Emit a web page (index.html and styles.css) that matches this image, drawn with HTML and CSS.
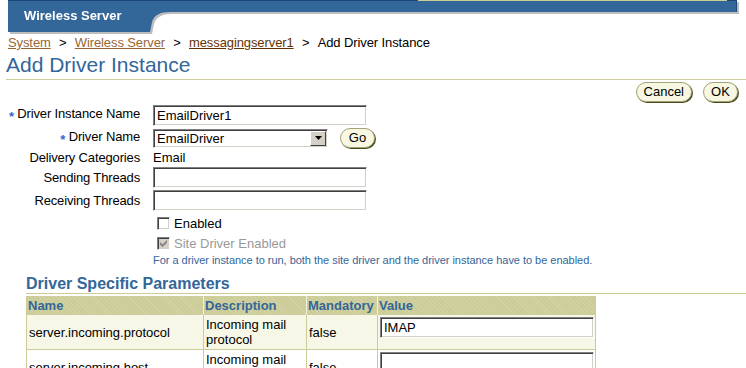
FILE: index.html
```html
<!DOCTYPE html>
<html lang="en">
<head>
    <meta charset="UTF-8">
    <meta name="viewport" content="width=device-width, initial-scale=1.0">
    <title>Add Driver Instance</title>
    <link rel="stylesheet" href="styles.css">
</head>
<body>
    <div class="header">
        <div class="tab">Wireless Server</div>
        <svg class="tab-edge" width="23" height="32" viewBox="0 0 23 32">
            <path d="M0 0H23V12C13 12 7 15 5 22L3 32H0Z" fill="#336699"/>
            <rect x="0" y="0" width="23" height="1" fill="#1d4878"/>
        </svg>
        <div class="bar"><div class="bar-strip"></div></div>
    </div>

    <div class="crumbs">
        <a href="#" class="crumb">System</a><span class="sep">&gt;</span><a href="#" class="crumb">Wireless Server</a><span class="sep">&gt;</span><a href="#" class="crumb visited">messagingserver1</a><span class="sep">&gt;</span><span>Add Driver Instance</span>
    </div>

    <h1 class="title">Add Driver Instance</h1>

    <div class="actions">
        <button type="button" class="pill">Cancel</button>
        <button type="button" class="pill">OK</button>
    </div>

    <form class="form">
        <label class="form-label" for="instanceName"><span class="req">*</span> Driver Instance Name</label>
        <div class="form-field"><input type="text" class="text-input" id="instanceName" value="EmailDriver1" autofocus></div>

        <label class="form-label"><span class="req">*</span> Driver Name</label>
        <div class="form-field">
            <div class="select">
                <span>EmailDriver</span>
                <span class="select-arrow">
                    <svg width="7" height="4" viewBox="0 0 7 4"><path d="M0 0H7L3.5 4Z" fill="#000"/></svg>
                </span>
            </div>
            <button type="button" class="pill">Go</button>
        </div>

        <div class="form-label">Delivery Categories</div>
        <div class="form-field">Email</div>

        <label class="form-label" for="sendThreads">Sending Threads</label>
        <div class="form-field"><input type="text" class="text-input" id="sendThreads"></div>

        <label class="form-label" for="recvThreads">Receiving Threads</label>
        <div class="form-field"><input type="text" class="text-input" id="recvThreads"></div>

        <label class="check">
            <span class="box"></span>Enabled
        </label>

        <label class="check disabled">
            <span class="box">
                <svg width="7" height="7" viewBox="0 0 7 7"><path d="M0 2L0 4.5L2.5 7L7 2.5L7 0L2.5 4.5Z" fill="#808080"/></svg>
            </span>Site Driver Enabled
        </label>

        <div class="hint">For a driver instance to run, both the site driver and the driver instance have to be enabled.</div>
    </form>

    <h2 class="section-title">Driver Specific Parameters</h2>

    <table class="params">
        <thead>
            <tr>
                <th class="col-name">Name</th>
                <th class="col-desc">Description</th>
                <th class="col-mand">Mandatory</th>
                <th class="col-value">Value</th>
            </tr>
        </thead>
        <tbody>
            <tr class="row-alt">
                <td>server.incoming.protocol</td>
                <td>Incoming mail protocol</td>
                <td>false</td>
                <td><input type="text" class="text-input cell-input" value="IMAP"></td>
            </tr>
            <tr>
                <td>server.incoming.host</td>
                <td>Incoming mail host</td>
                <td>false</td>
                <td><input type="text" class="text-input cell-input"></td>
            </tr>
        </tbody>
    </table>
</body>
</html>
```

FILE: styles.css
```css
body {
    margin: 0;
    font-family: "Liberation Sans", Arial, Helvetica, sans-serif;
    font-size: 13px;
    color: #000;
    background: #fff;
}
.header {
    display: flex;
    height: 32px;
    margin: 0 9px 0 8px;
    filter: drop-shadow(2px 2px 0 #bdbdbd);
}
.tab {
    width: 139px;
    padding-left: 16px;
    box-sizing: border-box;
    background: linear-gradient(#1d4878 0 1px, #336699 1px);
    color: #fff;
    font-weight: bold;
    line-height: 32px;
}
.tab-edge {
    display: block;
    flex: none;
}
.bar {
    flex: 1;
    height: 12px;
    background: linear-gradient(#1d4878 0 1px, #336699 1px);
    border-right: 1px solid #1d4878;
}
.bar-strip {
    height: 1px;
    margin: 0 9px 0 248px;
    background: #cccc99;
}
.crumbs {
    margin: 3px 0 0 8px;
    line-height: 16px;
    letter-spacing: -0.1px;
}
.crumb {
    color: #996633;
}
.crumb.visited {
    color: #663300;
}
.sep {
    display: inline-block;
    width: 24px;
    text-align: center;
}
.title {
    margin: 2px 0 0 6px;
    padding-bottom: 2px;
    font-size: 21px;
    font-weight: normal;
    line-height: 24px;
    color: #336699;
    border-bottom: 1px solid #cccc99;
}
.actions {
    display: flex;
    justify-content: flex-end;
    gap: 11px;
    margin: 2px 8px 0 0;
}
.pill {
    height: 20px;
    min-width: 35px;
    padding: 0 7px;
    font-family: "Liberation Sans", Arial, Helvetica, sans-serif;
    font-size: 13px;
    line-height: 18px;
    color: #000;
    background: #f7f7e2;
    border: 1px solid #a3a37a;
    border-radius: 10px;
    box-shadow: 1px 1px 0 #4a4a1c;
    cursor: pointer;
}
.form {
    display: grid;
    grid-template-columns: 140px 1fr;
    grid-template-rows: 24px 22px 17px 22px 25px 20px 20px 14px;
    column-gap: 13px;
    margin-top: 1px;
}
.form-label {
    align-self: center;
    text-align: right;
    white-space: nowrap;
    letter-spacing: -0.15px;
}
.form-field {
    display: flex;
    align-items: center;
    gap: 12px;
    align-self: center;
}
.req {
    color: #3366cc;
    font-weight: bold;
    vertical-align: -3px;
}
.text-input {
    width: 214px;
    height: 21px;
    box-sizing: border-box;
    padding: 0 2px 0 3px;
    font-family: "Liberation Sans", Arial, Helvetica, sans-serif;
    font-size: 13px;
    color: #000;
    border: 1px solid;
    border-color: #808080 #fff #fff #808080;
    box-shadow: inset 1px 1px 0 #404040, inset -1px -1px 0 #d4d0c8;
    outline: none;
    caret-color: #000;
}
.select {
    display: flex;
    align-items: center;
    width: 175px;
    height: 19px;
    box-sizing: border-box;
    padding-left: 3px;
    border: 1px solid;
    border-color: #808080 #fff #fff #808080;
    box-shadow: inset 1px 1px 0 #404040, inset -1px -1px 0 #d4d0c8;
}
.select-arrow {
    display: flex;
    align-items: center;
    justify-content: center;
    width: 16px;
    height: 15px;
    box-sizing: border-box;
    margin-left: auto;
    margin-right: 1px;
    background: #d4d0c8;
    border: 1px solid;
    border-color: #fff #404040 #404040 #fff;
}
.check {
    grid-column: 2;
    display: flex;
    align-items: center;
    gap: 4px;
    margin-left: 4px;
    align-self: center;
}
.box {
    display: flex;
    align-items: center;
    justify-content: center;
    width: 13px;
    height: 13px;
    box-sizing: border-box;
    background: #fff;
    border: 1px solid;
    border-color: #808080 #fff #fff #808080;
    box-shadow: inset 1px 1px 0 #404040, inset -1px -1px 0 #d4d0c8;
}
.check.disabled {
    color: #999;
}
.check.disabled .box {
    background: #d4d0c8;
}
.hint {
    grid-column: 2;
    align-self: center;
    font-size: 11px;
    color: #336699;
    white-space: nowrap;
    letter-spacing: -0.03px;
}
.section-title {
    margin: 7px 0 0 26px;
    font-size: 16px;
    line-height: 19px;
    color: #336699;
    border-bottom: 1px solid #cccc99;
}
.params {
    width: 570px;
    margin: 2px 0 0 26px;
    table-layout: fixed;
    border-collapse: separate;
    border-spacing: 0;
}
.params th {
    box-sizing: border-box;
    height: 19px;
    padding: 1px;
    font-size: 13px;
    line-height: 17px;
    text-align: left;
    color: #336699;
    background: repeating-linear-gradient(45deg, rgba(255, 255, 255, 0.12) 0 1px, transparent 1px 3px), #cccc99;
    border-left: 1px solid #f2f2dc;
    white-space: nowrap;
}
.params th:first-child {
    border-left-color: #cccc99;
}
.params th:last-child {
    border-right: 1px solid #cccc99;
}
.col-name { width: 177px; }
.col-desc { width: 103px; }
.col-mand { width: 71px; }
.col-value { width: 219px; }
.params td {
    padding: 2px;
    line-height: 15px;
    vertical-align: middle;
    border-left: 1px solid #cccc99;
    border-bottom: 1px solid #cccc99;
}
.params td:last-child {
    vertical-align: top;
    border-right: 1px solid #cccc99;
}
.row-alt td {
    background: #f7f7e7;
}
.cell-input {
    display: block;
}
```
